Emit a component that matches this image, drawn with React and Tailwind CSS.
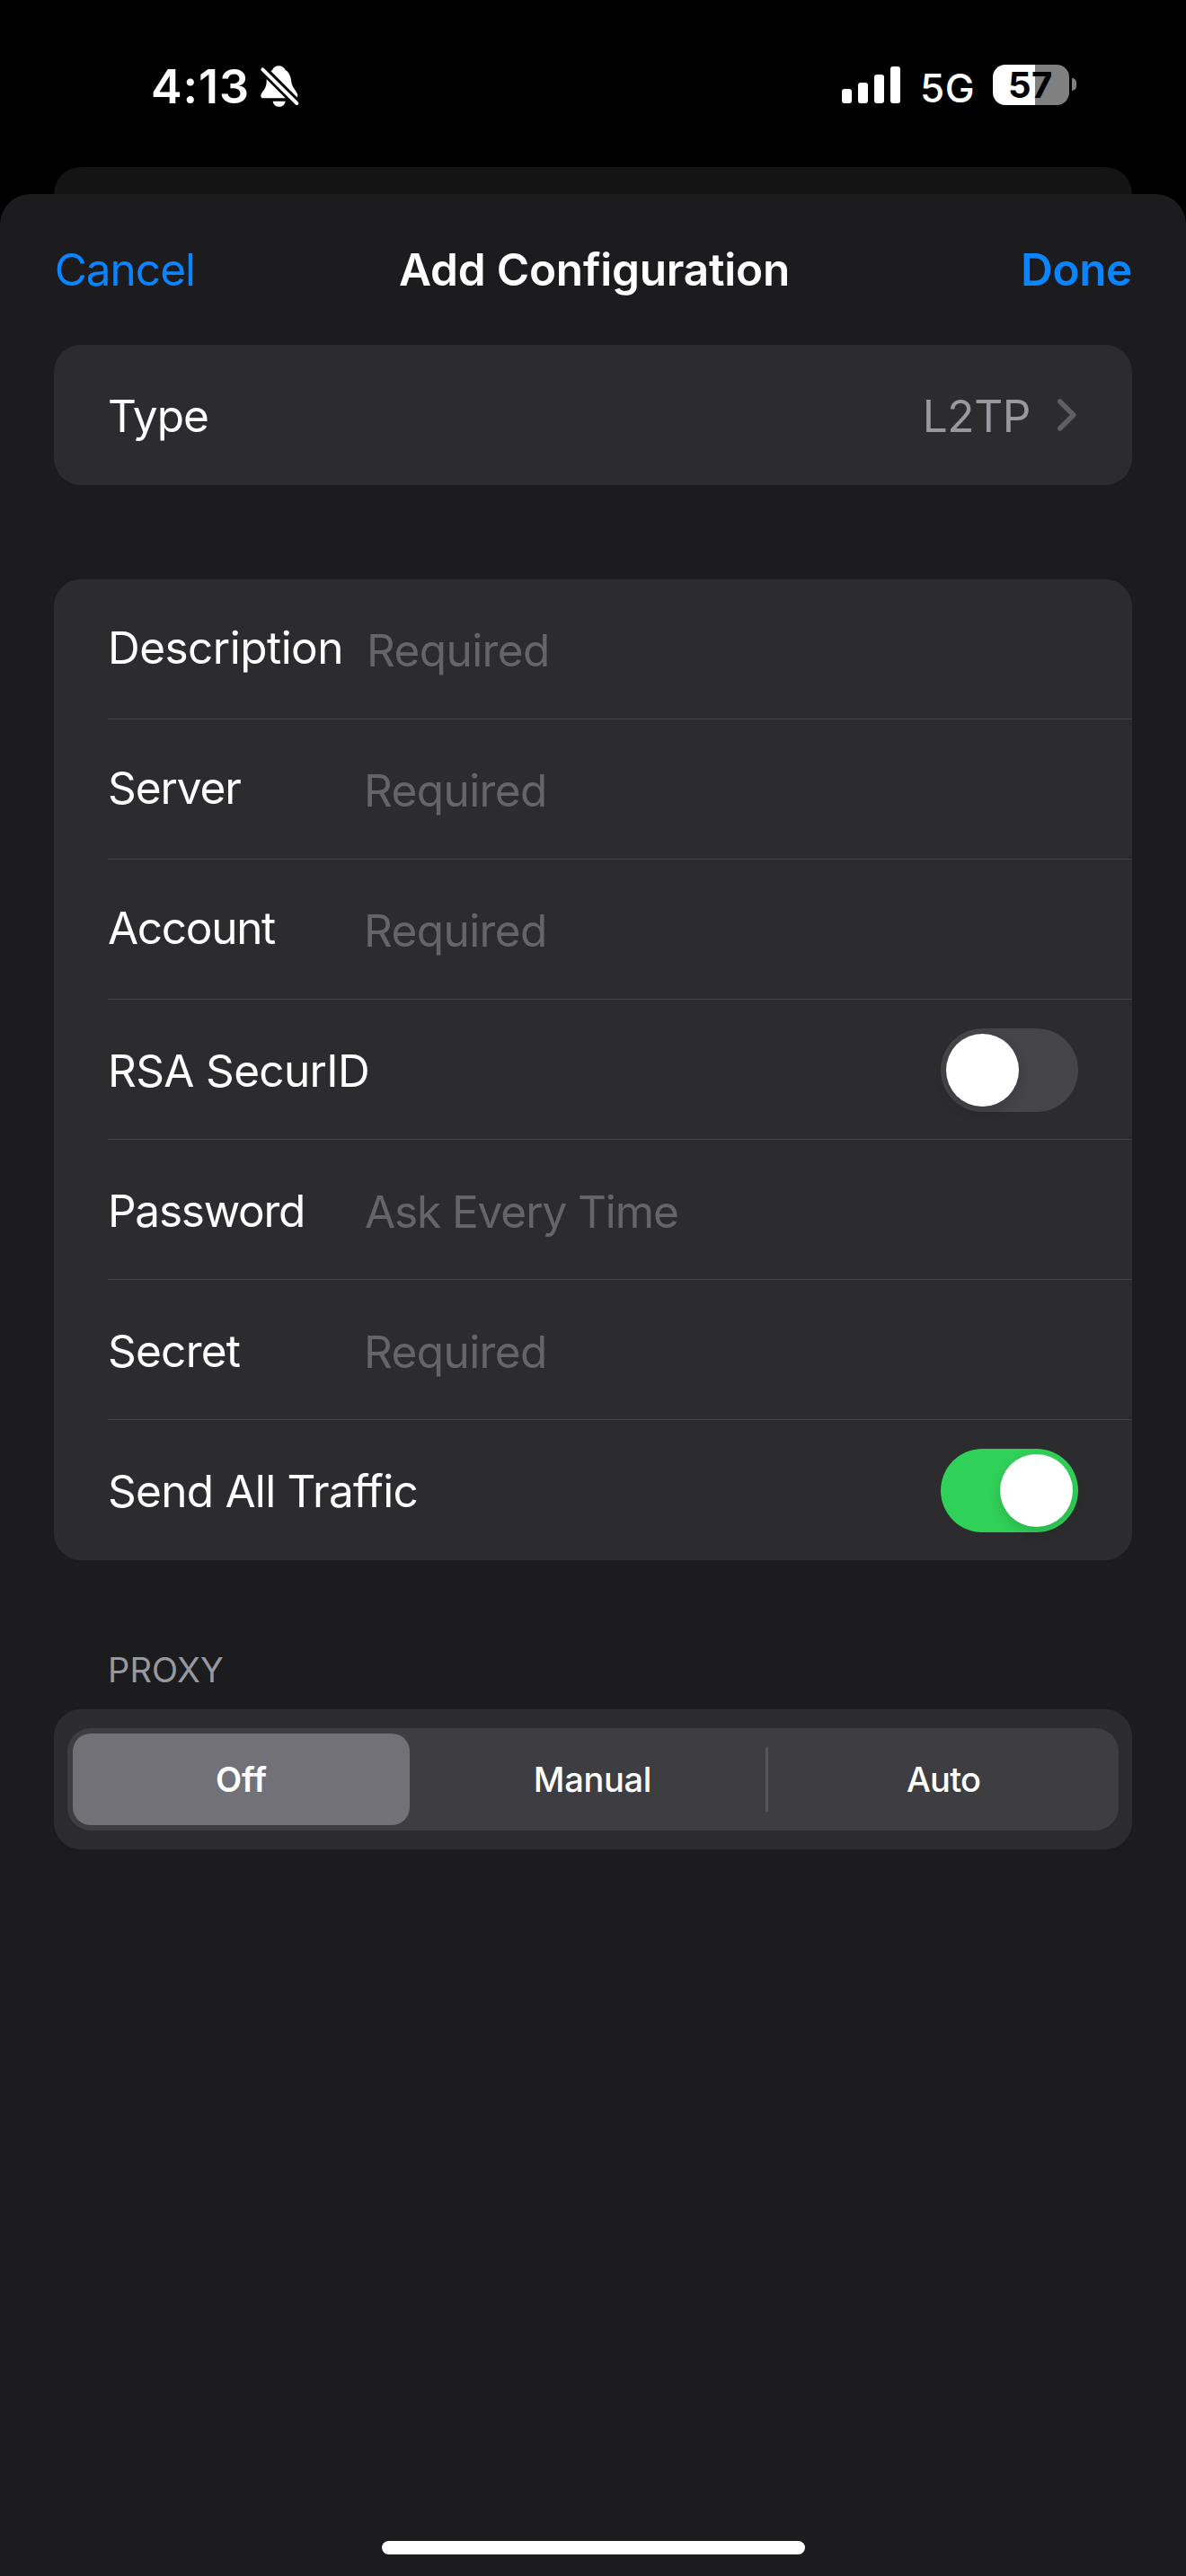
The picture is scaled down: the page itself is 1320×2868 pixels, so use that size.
function BellSlash() {
  return (
    <svg viewBox="0 0 150 150" className="mt-[70px] ml-[9px] h-[50px] w-[50px]">
      <path
        fill="#fff"
        d="M70 10C80 10 88 16 92 24C106 32 110 48 112 64C114 84 132 96 133 108Q133 118 124 118H18Q10 118 10 110C10 98 26 92 29 66L29 55C31 40 36 32 48 24C52 16 60 10 70 10Z"
      />
      <path fill="#fff" d="M50 128H92C90 140 82 146 71 146C60 146 52 140 50 128Z" />
      <path stroke="#000" strokeWidth="29" d="M6 11L140 145" />
      <path stroke="#fff" strokeWidth="12" strokeLinecap="round" d="M16 22L130 135" />
    </svg>
  );
}

function StatusBar() {
  return (
    <div className="flex h-[186px] items-start pl-[168px] text-white">
      <span className="mt-[65px] text-[52px] leading-[63px] font-semibold tracking-[0.9px]">4:13</span>
      <BellSlash />
      <div className="mt-[74px] ml-auto flex h-[41px] w-[65px] items-end justify-between">
        <div className="h-[16px] w-[11px] rounded-[3px] bg-white" />
        <div className="h-[23px] w-[11px] rounded-[3px] bg-white" />
        <div className="h-[32px] w-[11px] rounded-[3px] bg-white" />
        <div className="h-[41px] w-[11px] rounded-[3px] bg-white" />
      </div>
      <span className="mt-[71px] ml-[22px] w-[81px] text-[44px] leading-[54px] font-medium tracking-[0.6px]">5G</span>
      <div className="mt-[72px] h-[45px] w-[85px] rounded-[14px] bg-linear-to-r from-white from-[47.5px] to-[#808080] to-[47.5px] pl-[17px] text-[40px] leading-[45px] font-bold tracking-[0.4px] text-black">
        57
      </div>
      <div className="mt-[87px] mr-[122px] ml-[3px] h-[14px] w-[5px] rounded-r-full bg-[#808080]" />
    </div>
  );
}

function Toggle({ on }) {
  return (
    <button
      role="switch"
      aria-checked={on}
      className={
        on
          ? "mt-[32px] flex h-[93px] w-[153px] justify-end rounded-full bg-[#30d158] p-[6px]"
          : "mt-[32px] flex h-[93px] w-[153px] justify-start rounded-full bg-[#454449] p-[6px]"
      }
    >
      <span className="h-[81px] w-[81px] rounded-full bg-white shadow-[0_6px_14px_rgba(0,0,0,0.14)]" />
    </button>
  );
}

const rows = [
  { label: "Description", spacing: "tracking-[-0.53px]", top: "pt-[46px]", hint: "Required", hintClass: "pt-[49px] pl-[3px] tracking-[-0.6px]" },
  { label: "Server", spacing: "tracking-[-1.1px]", top: "pt-[46px]", hint: "Required", hintClass: "pt-[49px] tracking-[-0.6px]" },
  { label: "Account", spacing: "tracking-[-1.3px]", top: "pt-[46px]", hint: "Required", hintClass: "pt-[49px] tracking-[-0.6px]" },
  { label: "RSA SecurID", spacing: "tracking-[-0.66px]", top: "pt-[49px]", toggle: true, on: false },
  { label: "Password", spacing: "tracking-[-1.25px]", top: "pt-[49px]", hint: "Ask Every Time", hintClass: "pt-[50px] pl-px tracking-[-1.1px]" },
  { label: "Secret", spacing: "tracking-[-0.75px]", top: "pt-[49px]", hint: "Required", hintClass: "pt-[50px] tracking-[-0.6px]" },
  { label: "Send All Traffic", spacing: "tracking-[-0.73px]", top: "pt-[49px]", toggle: true, on: true },
];

function Row({ row, last }) {
  return (
    <div className={last ? "flex h-[156px]" : "flex h-[156px] border-b border-[#444447]"}>
      <div className={`${row.toggle ? "flex-1" : "w-[285px]"} ${row.spacing} ${row.top} whitespace-nowrap`}>{row.label}</div>
      {row.toggle ? (
        <div className="pr-[60px]">
          <Toggle on={row.on} />
        </div>
      ) : (
        <div className={`flex-1 text-[#656569] ${row.hintClass}`}>{row.hint}</div>
      )}
    </div>
  );
}

export default function App() {
  return (
    <div className="flex h-[2868px] w-[1320px] flex-col bg-black font-['Inter',sans-serif]">
      <StatusBar />
      <div className="mx-[60px] h-[30px] shrink-0 rounded-t-[30px] bg-[#141415]" />
      <div className="flex flex-1 flex-col rounded-t-[34px] bg-[#1c1c1e] px-[60px] text-[49.5px] leading-[60px] text-white">
        <header className="grid h-[168px] grid-cols-[1fr_auto_1fr] pt-[54px]">
          <span className="pl-[0.7px] tracking-[-1.01px] text-[#0a84ff]">Cancel</span>
          <h1 className="pl-[3px] font-semibold tracking-[-0.21px]">Add Configuration</h1>
          <span className="text-right font-semibold tracking-[-0.39px] text-[#0a84ff]">Done</span>
        </header>

        <section className="flex h-[156px] rounded-[30px] bg-[#2c2c2e] pt-[49px] pr-[60px] pl-[60px]">
          <span className="flex-1 tracking-[-1px]">Type</span>
          <span className="tracking-[-0.38px] text-[#98989f]">L2TP</span>
          <svg viewBox="0 0 24 40" fill="none" className="mt-[9px] ml-[29px] h-[40px] w-[24px]">
            <path d="M3.8 5L18.8 20L3.8 35" stroke="#5f5f63" strokeWidth="5.6" strokeLinecap="round" strokeLinejoin="round" />
          </svg>
        </section>

        <section className="mt-[105px] rounded-[30px] bg-[#2c2c2e] pl-[60px]">
          {rows.map((row, i) => (
            <Row key={row.label} row={row} last={i === rows.length - 1} />
          ))}
        </section>

        <h2 className="mt-[99px] pl-[60px] text-[38px] leading-[46px] tracking-[0.15px] text-[#98989f]">PROXY</h2>
        <section className="mt-[21px] h-[156px] rounded-[30px] bg-[#2c2c2e] px-[15px] py-[21px]">
          <div className="flex h-[114px] rounded-[26px] bg-[#3e3d42] p-[6px] text-center text-[38px] leading-[46px]">
            <div className="h-[102px] w-[375px] rounded-[20px] bg-[#727177] pt-[28px] font-semibold">Off</div>
            <div className="w-[396px] pt-[28px] pl-[11px] font-medium tracking-[-0.31px]">Manual</div>
            <div className="mt-[15px] h-[72px] w-[3px] rounded-full bg-[#55555a]" />
            <div className="flex-1 pt-[28px] pl-[6px] font-medium tracking-[-0.79px]">Auto</div>
          </div>
        </section>

        <div className="mx-auto mt-auto mb-[24px] h-[15px] w-[471px] rounded-full bg-white" />
      </div>
    </div>
  );
}
